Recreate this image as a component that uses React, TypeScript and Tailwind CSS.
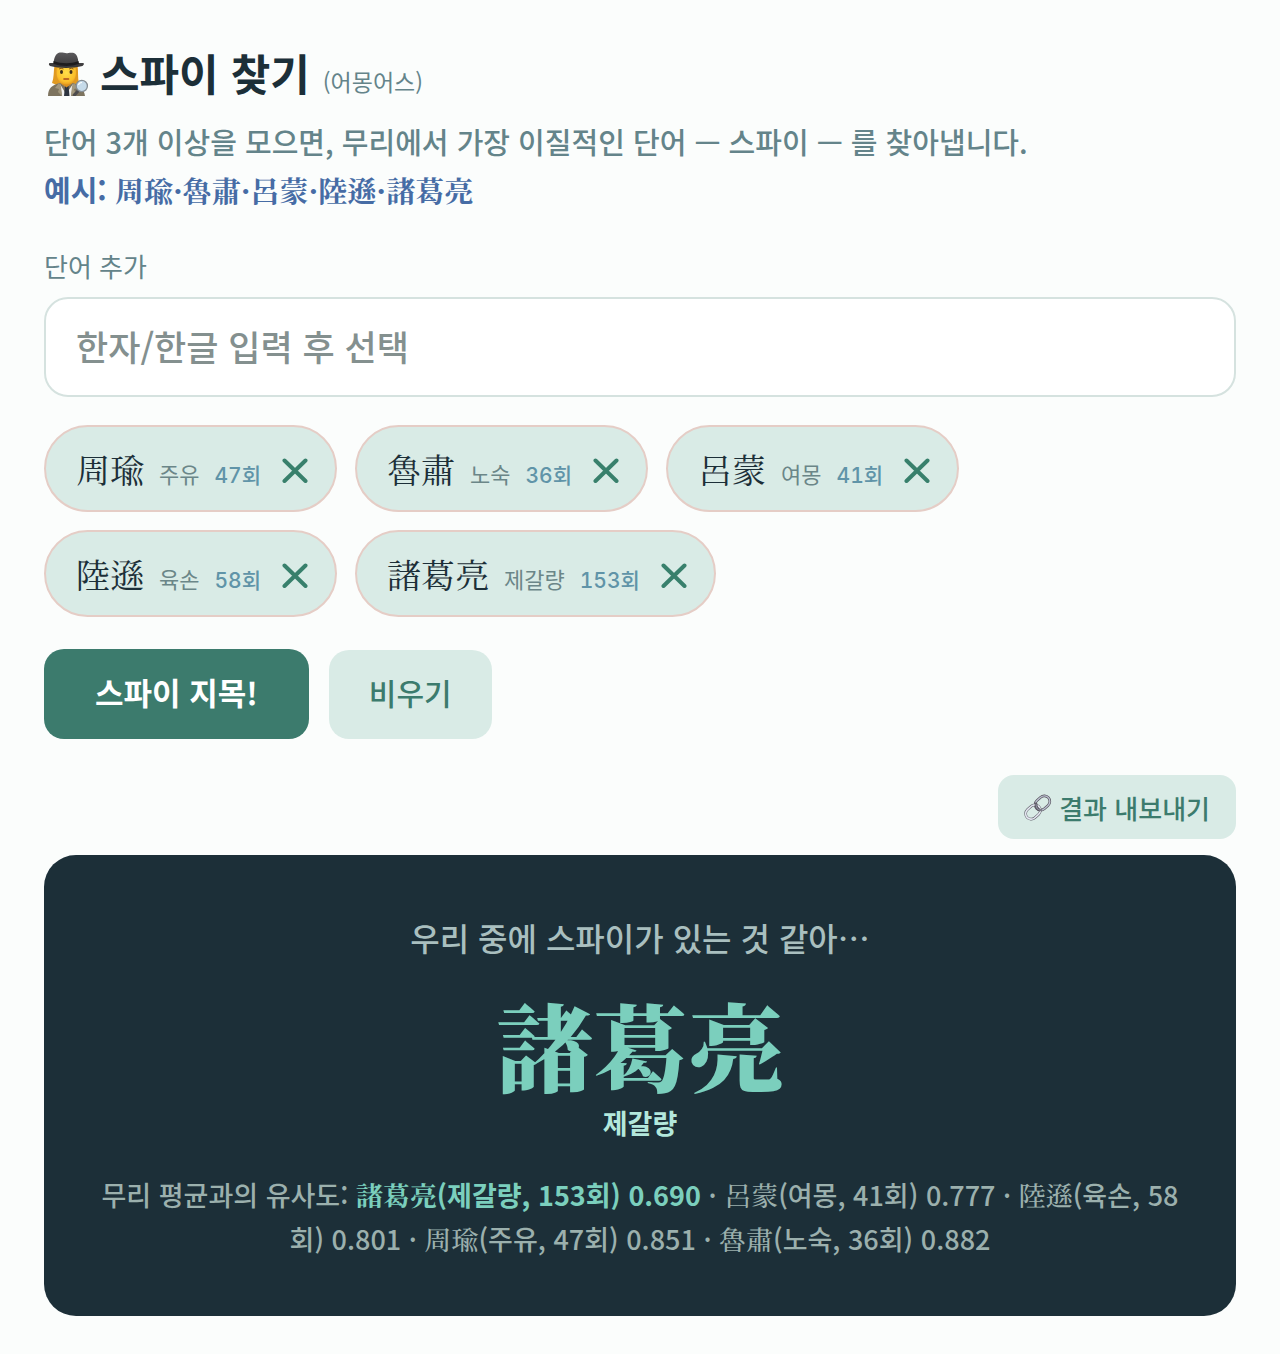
import React, { useState } from "react";

type Word = { hanja: string; hangul: string; count: number; score: string };

const WORDS: Word[] = [
  { hanja: "周瑜", hangul: "주유", count: 47, score: "0.851" },
  { hanja: "魯肅", hangul: "노숙", count: 36, score: "0.882" },
  { hanja: "呂蒙", hangul: "여몽", count: 41, score: "0.777" },
  { hanja: "陸遜", hangul: "육손", count: 58, score: "0.801" },
  { hanja: "諸葛亮", hangul: "제갈량", count: 153, score: "0.690" },
];

function Hanja({ children }: { children: React.ReactNode }) {
  return (
    <span className="font-['Noto_Serif_KR','Noto_Serif_CJK_KR','Noto_Sans_CJK_KR',serif]">
      {children}
    </span>
  );
}

function SpyIcon() {
  return (
    <svg viewBox="0 0 42 44" className="h-11 w-[42px] shrink-0" aria-hidden="true">
      <defs>
        <radialGradient id="face" cx="50%" cy="40%" r="65%">
          <stop offset="0" stopColor="#ffdf4a" />
          <stop offset="0.7" stopColor="#fbbf2b" />
          <stop offset="1" stopColor="#e2951c" />
        </radialGradient>
        <linearGradient id="hat" x1="0" y1="0" x2="0" y2="1">
          <stop offset="0" stopColor="#5b5a5c" />
          <stop offset="1" stopColor="#363537" />
        </linearGradient>
      </defs>
      {/* hair */}
      <path d="M7.500 13 C6.500 20 7 26 5 31 L12 34 H27 L32 31 C30.500 26 31.500 20 30.500 13 Z" fill="#e09a22" />
      {/* coat */}
      <path d="M1 44 C1 36 5 33 13 31 L19 35 L26 31 C32 33 37 36 38 44 Z" fill="#7d745f" />
      <path d="M13 32 L19 42 L26 32 L24 44 H15 Z" fill="#f1f1f0" />
      <path d="M18 34 H21.500 L22.500 44 H17 Z" fill="#2c3440" />
      <path d="M12 31 L8 36 L12 37 L11 40 L15 44 L14 34 Z M27 31 L31 36 L27 37 L28 40 L24 44 L25 34 Z" fill="#a2977d" />
      <path d="M15 28 H24 V32 L19.500 35.500 L15 32 Z" fill="#d98f20" />
      {/* face */}
      <path d="M9.500 13 H29 V21 C29 28 24.500 32.500 19.300 32.500 C14 32.500 9.500 28 9.500 21 Z" fill="url(#face)" />
      <ellipse cx="14.500" cy="20" rx="1.500" ry="1.900" fill="#42301c" />
      <ellipse cx="24" cy="20" rx="1.500" ry="1.900" fill="#42301c" />
      <path d="M12 17 Q14 15.500 16.500 17 M22 17 Q24.500 15.500 26.500 17" fill="none" stroke="#8b5a16" strokeWidth="1" />
      <path d="M17 27 H21.500" fill="none" stroke="#a8491f" strokeWidth="1.600" strokeLinecap="round" />
      {/* hat */}
      <path d="M6.500 11 C7.500 3 10 0.500 14 0.500 C16 0.500 18 1.200 19.500 1.200 C21 1.200 23 0.300 26 0.800 C30 1.500 31 6 31.500 11 L36 11 C37.500 11 37 13 35.500 14 C26 16.500 12 16.500 3 14 C1.500 13 1.500 11 3 11 Z" fill="url(#hat)" />
      <path d="M6.500 9 C15 12 24 12 31.500 9 L32 12 C24 14.500 15 14.500 6.500 12 Z" fill="#1e1d1f" />
      {/* magnifier */}
      <path d="M31 39 L27.500 43" stroke="#4c4b4d" strokeWidth="3" strokeLinecap="round" />
      <circle cx="34.800" cy="34" r="5.600" fill="#c6dbea" stroke="#858d94" strokeWidth="1.300" />
      <path d="M31.500 33 Q32 30.500 35 30.500" fill="none" stroke="#fff" strokeWidth="1.200" />
    </svg>
  );
}

function LinkIcon() {
  return (
    <svg viewBox="0 0 28 28" className="h-7 w-7 shrink-0" fill="none" aria-hidden="true">
      <g transform="rotate(-42 18.500 10)">
        <rect x="10.500" y="4.500" width="16" height="11" rx="5.500" stroke="#55505a" strokeWidth="2.600" />
        <rect x="10.500" y="4.500" width="16" height="11" rx="5.500" stroke="#bcc1d2" strokeWidth="1.400" />
      </g>
      <g transform="rotate(-42 9 19)">
        <rect x="1" y="13.500" width="16" height="11" rx="5.500" stroke="#5b5965" strokeWidth="2.600" />
        <rect x="1" y="13.500" width="16" height="11" rx="5.500" stroke="#e4e7f1" strokeWidth="1.600" />
      </g>
      <path d="M12 11 C12 14 13 16 15.500 17" stroke="#55505a" strokeWidth="2.800" strokeLinecap="round" />
      <path d="M12 11 C12 14 13 16 15.500 17" stroke="#8d90a0" strokeWidth="1.200" strokeLinecap="round" />
    </svg>
  );
}

function Score({ word }: { word: Word }) {
  return (
    <>
      <Hanja>{word.hanja}</Hanja>({word.hangul}, {word.count}회) {word.score}
    </>
  );
}

export default function App() {
  const [words, setWords] = useState<Word[]>(WORDS);
  const [query, setQuery] = useState("");

  const removeWord = (hanja: string) => {
    setWords(words.filter((w) => w.hanja !== hanja));
  };

  const ranked = [...WORDS].sort((a, b) => Number(a.score) - Number(b.score));
  const spy = ranked[0];

  return (
    <main
      lang="ko"
      className="min-h-screen bg-[#fbfdfc] px-11 pt-[42px] pb-[38px] font-['Noto_Sans_CJK_KR',sans-serif] font-medium text-[#1c2f38]"
    >
      {/* Header */}
      <h1 className="flex items-baseline text-[43px] leading-[60px] font-bold">
        <span className="mr-[11px] ml-[3px] self-start pt-[10px]">
          <SpyIcon />
        </span>
        스파이 찾기
        <span className="ml-[13px] text-[23px] font-normal text-[#64848a]">(어몽어스)</span>
      </h1>
      <p className="mt-[6px] text-[29px] leading-[48px] text-[#64848a]">
        단어 3개 이상을 모으면, 무리에서 가장 이질적인 단어 — 스파이 — 를 찾아냅니다.
        <br />
        <b className="font-bold text-[#466ca5]">
          예시: <Hanja>周瑜·魯肅·呂蒙·陸遜·諸葛亮</Hanja>
        </b>
      </p>

      {/* Word input */}
      <label htmlFor="word" className="mt-[31px] block text-[26px] leading-[42px] font-normal text-[#64848a]">
        단어 추가
      </label>
      <input
        id="word"
        type="text"
        value={query}
        onChange={(e) => setQuery(e.target.value)}
        placeholder="한자/한글 입력 후 선택"
        className="mt-[10px] block h-[100px] w-full rounded-3xl border-2 border-[#d5e2df] bg-white px-[30px] pb-1 text-[35px] outline-none placeholder:text-[#84908f]"
      />

      {/* Chips */}
      <ul className="mt-7 flex flex-wrap gap-[18px]">
        {words.map((w) => (
          <li
            key={w.hanja}
            className="flex h-[87px] items-center rounded-full border-2 border-[#e5cdc6] bg-[#d9ebe6] pr-[27px] pl-[30px]"
          >
            <span className="flex items-baseline gap-[15px] text-[22px] font-normal">
              <span className="text-[34px] leading-[50px]">
                <Hanja>{w.hanja}</Hanja>
              </span>
              <span className="text-[#6b8688]">{w.hangul}</span>
              <span className="font-['Inter','Noto_Sans_CJK_KR',sans-serif] text-[21px] font-medium text-[#6094a8] tabular-nums">
                {w.count}회
              </span>
            </span>
            <button
              type="button"
              aria-label={`${w.hangul} 삭제`}
              onClick={() => removeWord(w.hanja)}
              className="ml-[21px] text-[#38806c]"
            >
              <svg viewBox="0 0 26 28" className="h-7 w-[26px]" aria-hidden="true">
                <path d="M2.500 5.500 L23.500 26 M23.500 5.500 L2.500 26" stroke="currentColor" strokeWidth="4" strokeLinecap="round" />
              </svg>
            </button>
          </li>
        ))}
      </ul>

      {/* Actions */}
      <div className="mt-8 flex items-end gap-5">
        <button
          type="button"
          className="h-[90px] rounded-[20px] bg-[#3c7b6d] px-[51px] pb-1 text-[31px] font-bold text-white"
        >
          스파이 지목!
        </button>
        <button
          type="button"
          onClick={() => setWords([])}
          className="h-[89px] rounded-[20px] bg-[#d9ebe6] px-10 pb-1 text-[30px] text-[#3c7b6d]"
        >
          비우기
        </button>
      </div>

      <div className="mt-9 flex justify-end">
        <button
          type="button"
          className="flex h-16 items-center gap-[7px] rounded-2xl bg-[#d9ebe6] px-[26px] text-[26px] text-[#3c7b6d]"
        >
          <LinkIcon />
          결과 내보내기
        </button>
      </div>

      {/* Result */}
      <section className="mt-4 rounded-[32px] bg-[#1c2f38] px-12 pt-14 pb-[54px] text-center">
        <p className="text-[32px] leading-[52px] text-[#a9bfbf]">우리 중에 스파이가 있는 것 같아…</p>
        <p className="mt-[23px] text-[96px] leading-[116px] font-black text-[#7bcfbd]">
          <Hanja>{spy.hanja}</Hanja>
        </p>
        <p className="mt-[1px] text-[27px] leading-[40px] font-bold text-[#b3e8dc]">{spy.hangul}</p>
        <p className="mt-[30px] mb-[1px] text-[27px] leading-[44px] text-[#9bb0ad]">
          무리 평균과의 유사도:{" "}
          <b className="font-bold text-[#7bcfbd]">
            <Score word={spy} />
          </b>
          {ranked.slice(1).map((w) => (
            <React.Fragment key={w.hanja}>
              {" · "}
              <Score word={w} />
            </React.Fragment>
          ))}
        </p>
      </section>
    </main>
  );
}
